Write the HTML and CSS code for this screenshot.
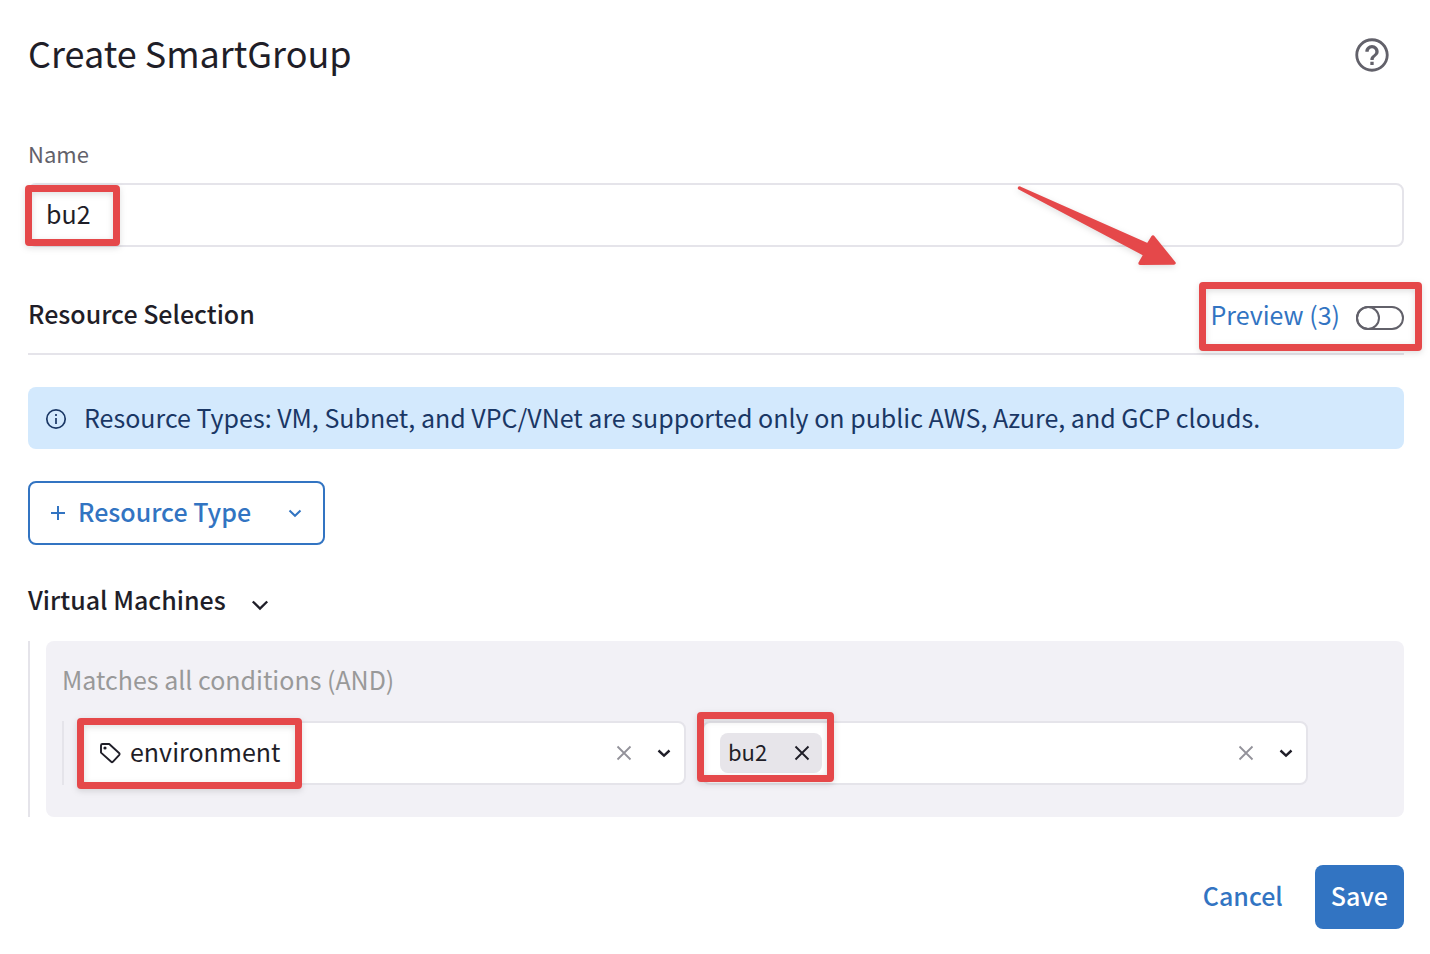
FILE: index.html
```html
<!DOCTYPE html>
<html lang="en">
<head>
<meta charset="utf-8">
<title>Create SmartGroup</title>
<link rel="stylesheet" href="styles.css">
</head>
<body>
<form class="page">
  <header class="page-header">
    <h1 class="title">Create SmartGroup</h1>
    <button type="button" class="icon-button help" aria-label="Help">
      <svg width="40" height="40" viewBox="0 0 24 24" fill="currentColor"><path d="M11 18h2v-2h-2v2zm1-16C6.480 2 2 6.480 2 12s4.480 10 10 10 10-4.480 10-10S17.520 2 12 2zm0 18.300c-4.600 0-8.300-3.700-8.300-8.300S7.400 3.700 12 3.700s8.300 3.700 8.300 8.300-3.700 8.300-8.300 8.300zm0-14.300c-2.210 0-4 1.790-4 4h2c0-1.100.9-2 2-2s2 .9 2 2c0 2-3 1.750-3 5h2c0-2.250 3-2.500 3-5 0-2.210-1.790-4-4-4z"/></svg>
    </button>
  </header>

  <div class="field">
    <label class="label" for="name">Name</label>
    <div class="field-box">
      <input class="text-input" id="name" type="text" value="bu2">
      <span class="mark mark-name"></span>
    </div>
  </div>

  <section>
    <div class="section-head">
      <h2 class="heading section-title">Resource Selection</h2>
      <div class="preview">
        <label class="preview-label" for="preview">Preview (3)</label>
        <input class="toggle" id="preview" type="checkbox" role="switch">
        <span class="mark mark-preview"></span>
        <svg class="arrow" width="164" height="88" viewBox="0 0 164 88" aria-hidden="true"><path d="M5.500 5 L134 62 L139 54 L160 80 L126 80.300 L131 71.500 Z" fill="#e5484a" stroke="#e5484a" stroke-width="3.400" stroke-linejoin="round"/></svg>
      </div>
    </div>

    <div class="notice" role="note">
      <svg width="24" height="24" viewBox="0 0 24 24" fill="none" stroke="currentColor" stroke-width="1.700"><circle cx="12" cy="12" r="9.200"/><path d="M12 11v6M12 7v2"/></svg>
      <p class="notice-text">Resource Types: VM, Subnet, and VPC/VNet are supported only on public AWS, Azure, and GCP clouds.</p>
    </div>

    <button type="button" class="button button-outline">
      <svg width="16" height="16" viewBox="0 0 16 16" fill="none" stroke="currentColor" stroke-width="2"><path d="M8 1v14M1 8h14"/></svg>
      <span class="button-text">Resource Type</span>
      <svg width="16" height="16" viewBox="0 0 16 16" fill="none" stroke="currentColor" stroke-width="2"><path d="M2.500 5.500L8 10.800l5.500-5.300"/></svg>
    </button>
  </section>

  <section>
    <div class="group-head">
      <h2 class="heading group-title">Virtual Machines</h2>
      <button type="button" class="icon-button collapse" aria-label="Collapse Virtual Machines" aria-expanded="true">
        <svg width="20" height="20" viewBox="0 0 20 20" fill="none" stroke="currentColor" stroke-width="2.400"><path d="M2.800 6.500L10 13.500l7.200-7"/></svg>
      </button>
    </div>
    <div class="group">
      <div class="panel">
        <p class="panel-title">Matches all conditions (AND)</p>
        <div class="condition">
          <div class="combo">
            <svg class="tag" width="24" height="24" viewBox="0 0 24 24" fill="none" stroke="currentColor" stroke-width="1.900" stroke-linejoin="round"><path d="M3 4.500Q3 3 4.500 3H11.200L21.300 12.200Q22 13 21.300 13.800L14.800 20.800Q14 21.500 13.200 20.800L3 11.600Z"/><circle cx="7" cy="7" r="1.600" fill="currentColor" stroke="none"/></svg>
            <select class="select" aria-label="Property"><option>environment</option></select>
            <button type="button" class="icon-button clear" aria-label="Clear property"><svg width="16" height="16" viewBox="0 0 16 16" fill="none" stroke="currentColor" stroke-width="1.800"><path d="M1.500 1.500l13 13M14.500 1.500l-13 13"/></svg></button>
            <svg width="16" height="16" viewBox="0 0 16 16" fill="none" stroke="currentColor" stroke-width="2.400"><path d="M2.500 5.500L8 10.600l5.500-5.100"/></svg>
            <span class="mark mark-property"></span>
          </div>
          <div class="combo">
            <span class="chip">
              <span class="chip-text">bu2</span>
              <button type="button" class="icon-button" aria-label="Remove bu2"><svg width="16" height="16" viewBox="0 0 16 16" fill="none" stroke="currentColor" stroke-width="1.900"><path d="M1.500 1.500l13 13M14.500 1.500l-13 13"/></svg></button>
            </span>
            <input class="combo-input" type="text" aria-label="Values">
            <button type="button" class="icon-button clear" aria-label="Clear values"><svg width="16" height="16" viewBox="0 0 16 16" fill="none" stroke="currentColor" stroke-width="1.800"><path d="M1.500 1.500l13 13M14.500 1.500l-13 13"/></svg></button>
            <button type="button" class="icon-button" aria-label="Show values"><svg width="16" height="16" viewBox="0 0 16 16" fill="none" stroke="currentColor" stroke-width="2.400"><path d="M2.500 5.500L8 10.600l5.500-5.100"/></svg></button>
            <span class="mark mark-value"></span>
          </div>
        </div>
      </div>
    </div>
  </section>

  <footer class="actions">
    <button type="button" class="button">Cancel</button>
    <button type="submit" class="button button-primary">Save</button>
  </footer>
</form>
</body>
</html>
```
FILE: styles.css
```css
:root {
  --ink: #1f1e28;
  --muted: #62616a;
  --line: #e5e4ea;
  --blue: #3274c2;
  --red: #e5484a;
}

*, *::before { box-sizing: border-box; }

body {
  margin: 0;
  background: #fff;
  color: var(--ink);
  font: 400 25px/36px "Noto Sans CJK SC", "Noto Sans", sans-serif;
}

h1, h2, p { margin: 0; }

button, input, select {
  font: inherit;
  color: inherit;
}

svg { display: block; flex: none; }

.page { padding: 31px 26px 24px 28px; }

.page-header {
  display: flex;
  align-items: center;
  justify-content: space-between;
  height: 48px;
  padding-right: 12px;
  margin-bottom: 60px;
}

.title {
  padding-bottom: 6px;
  font-size: 36px;
  line-height: 48px;
  font-weight: 400;
}

.icon-button {
  display: block;
  padding: 0;
  border: 0;
  background: none;
  cursor: pointer;
}

.help { color: var(--muted); }

.label {
  display: block;
  margin-bottom: 16px;
  color: var(--muted);
  font-size: 22px;
  line-height: 28px;
}

.field-box { position: relative; }

.text-input {
  display: block;
  width: 100%;
  height: 64px;
  padding: 0 16px 4px;
  border: 2px solid var(--line);
  border-radius: 8px;
  background: #fff;
}

.section-head {
  display: flex;
  align-items: center;
  justify-content: space-between;
  height: 72px;
  margin: 36px 0 32px;
  border-bottom: 2px solid var(--line);
}

.heading { font-size: 25px; line-height: 36px; font-weight: 500; }
.section-title { padding-bottom: 10px; }
.group-title { padding-bottom: 12px; }

.preview {
  position: relative;
  display: flex;
  align-items: center;
  gap: 16px;
}

.preview-label { padding-bottom: 8px; color: var(--blue); }

.toggle {
  appearance: none;
  display: flex;
  align-items: center;
  width: 48px;
  height: 24px;
  margin: 0;
  border: 2px solid var(--muted);
  border-radius: 12px;
}

.toggle::before {
  content: "";
  flex: none;
  width: 24px;
  height: 24px;
  margin-left: -2px;
  border: 2px solid var(--muted);
  border-radius: 50%;
}

.notice {
  display: flex;
  align-items: center;
  gap: 16px;
  min-height: 62px;
  padding: 12px 16px 10px;
  margin-bottom: 32px;
  border-radius: 8px;
  background: #d3e9fd;
  color: #1a3765;
}

.notice-text { padding-bottom: 4px; }

.button {
  display: flex;
  align-items: center;
  justify-content: center;
  height: 64px;
  padding: 0 16px 4px;
  border: 0;
  border-radius: 8px;
  background: none;
  color: var(--blue);
  font-weight: 500;
  cursor: pointer;
}

.button-outline {
  gap: 12px;
  padding: 0 20px;
  border: 2px solid var(--blue);
}

.button-text { margin-right: 24px; padding-bottom: 4px; }

.button-primary { background: var(--blue); color: #fff; }

.group-head {
  display: flex;
  align-items: center;
  gap: 24px;
  padding: 36px 0 12px;
}

.group { padding-left: 16px; border-left: 2px solid var(--line); }

.panel {
  padding: 20px 96px 32px 16px;
  border-radius: 8px;
  background: #f2f1f6;
}

.panel-title { margin-bottom: 24px; color: #999; }

.condition {
  display: grid;
  grid-template-columns: 1fr 1fr;
  gap: 16px;
  padding-left: 16px;
  border-left: 2px solid var(--line);
}

.combo {
  position: relative;
  display: flex;
  align-items: center;
  gap: 24px;
  height: 64px;
  padding: 0 12px 0 16px;
  border: 2px solid var(--line);
  border-radius: 8px;
  background: #fff;
}

.tag { margin-right: -16px; }

.select,
.combo-input {
  appearance: none;
  flex: 1;
  min-width: 0;
  height: 40px;
  padding: 0 0 4px;
  border: 0;
  background: none;
}

.clear { color: #93929a; }

.chip {
  display: flex;
  align-items: center;
  gap: 27px;
  height: 40px;
  padding: 0 12px 0 8px;
  border-radius: 8px;
  background: #e7e5ea;
  font-size: 22px;
}

.chip-text { padding-bottom: 4px; }

.actions {
  display: flex;
  justify-content: flex-end;
  gap: 16px;
  margin-top: 48px;
}

/* Annotation frames and arrow */
.mark {
  position: absolute;
  border: 7px solid var(--red);
  border-radius: 4px;
  filter: drop-shadow(0 2px 3px rgba(0, 0, 0, 0.13));
  pointer-events: none;
}

.mark-name { left: -3px; top: 2px; width: 95px; height: 61px; }
.mark-preview { left: -11px; right: -18px; top: -14px; bottom: -11px; }
.mark-property { left: -5px; top: -5px; width: 225px; height: 71px; }
.mark-value { left: -7px; top: -11px; width: 137px; height: 70px; }

.arrow {
  position: absolute;
  right: 226px;
  bottom: 69px;
  filter: drop-shadow(0 2px 3px rgba(0, 0, 0, 0.13));
  pointer-events: none;
}
```
